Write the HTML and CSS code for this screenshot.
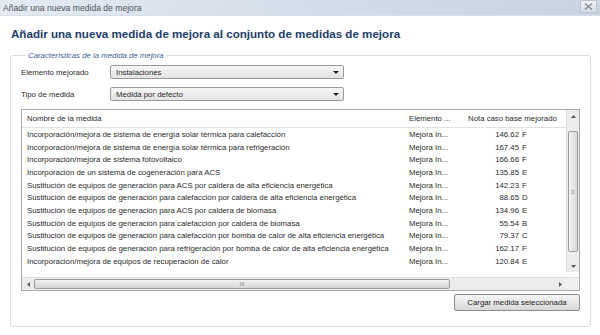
FILE: index.html
```html
<!DOCTYPE html>
<html>
  <head>
    <meta charset="UTF-8">
    <title>Añadir una nueva medida de mejora</title>
    <link rel="stylesheet" href="styles.css">
  </head>
  <body>
    <div class="window">
      <!-- Title bar -->
      <div class="titlebar">
        <span class="titlebar-text">Añadir una nueva medida de mejora</span>
        <span class="close-btn">
          <svg width="9" height="7" viewBox="0 0 9 7"><path d="M1 0.5 L8 6.5 M8 0.5 L1 6.5" stroke="#8a9099" stroke-width="1.4"/></svg>
        </span>
      </div>

      <div class="content">
        <h1 class="heading">Añadir una nueva medida de mejora al conjunto de medidas de mejora</h1>

        <fieldset class="group">
          <legend class="group-legend">Características de la medida de mejora</legend>

          <div class="field-row">
            <label class="field-label">Elemento mejorado</label>
            <div class="combo"><span>Instalaciones</span><span class="combo-arrow"></span></div>
          </div>
          <div class="field-row">
            <label class="field-label">Tipo de medida</label>
            <div class="combo"><span>Medida por defecto</span><span class="combo-arrow"></span></div>
          </div>

          <!-- Measures list -->
          <div class="grid">
            <div class="grid-main">
              <div class="grid-body">
                <div class="grid-row grid-header">
                  <span class="col-name">Nombre de la medida</span>
                  <span class="col-elem">Elemento ...</span>
                  <span class="col-nota head">Nota caso base mejorado</span>
                </div>
                <div class="grid-row"><span class="col-name">Incorporación/mejora de sistema de energía solar térmica para calefacción</span><span class="col-elem">Mejora In...</span><span class="col-nota"><span class="num">146.62</span>F</span></div>
                <div class="grid-row"><span class="col-name">Incorporación/mejora de sistema de energía solar térmica para refrigeración</span><span class="col-elem">Mejora In...</span><span class="col-nota"><span class="num">167.45</span>F</span></div>
                <div class="grid-row"><span class="col-name">Incorporación/mejora de sistema fotovoltaico</span><span class="col-elem">Mejora In...</span><span class="col-nota"><span class="num">166.66</span>F</span></div>
                <div class="grid-row"><span class="col-name">Incorporación de un sistema de cogeneración para ACS</span><span class="col-elem">Mejora In...</span><span class="col-nota"><span class="num">135.85</span>E</span></div>
                <div class="grid-row"><span class="col-name">Sustitución de equipos de generación para ACS por caldera de alta eficiencia energética</span><span class="col-elem">Mejora In...</span><span class="col-nota"><span class="num">142.23</span>F</span></div>
                <div class="grid-row"><span class="col-name">Sustitución de equipos de generación para calefacción por caldera de alta eficiencia energética</span><span class="col-elem">Mejora In...</span><span class="col-nota"><span class="num">88.65</span>D</span></div>
                <div class="grid-row"><span class="col-name">Sustitución de equipos de generación para ACS por caldera de biomasa</span><span class="col-elem">Mejora In...</span><span class="col-nota"><span class="num">134.96</span>E</span></div>
                <div class="grid-row"><span class="col-name">Sustitución de equipos de generación para calefacción por caldera de biomasa</span><span class="col-elem">Mejora In...</span><span class="col-nota"><span class="num">55.54</span>B</span></div>
                <div class="grid-row"><span class="col-name">Sustitución de equipos de generación para calefacción por bomba de calor de alta eficiencia energética</span><span class="col-elem">Mejora In...</span><span class="col-nota"><span class="num">79.37</span>C</span></div>
                <div class="grid-row"><span class="col-name">Sustitución de equipos de generación para refrigeración por bomba de calor de alta eficiencia energética</span><span class="col-elem">Mejora In...</span><span class="col-nota"><span class="num">162.17</span>F</span></div>
                <div class="grid-row"><span class="col-name">Incorporación/mejora de equipos de recuperación de calor</span><span class="col-elem">Mejora In...</span><span class="col-nota"><span class="num">120.84</span>E</span></div>
              </div>

              <!-- Vertical scrollbar -->
              <div class="vscroll">
                <span class="arrow-box"><svg width="5" height="3" viewBox="0 0 5 3"><path d="M0 3 L2.5 0 L5 3 Z" fill="#555"/></svg></span>
                <span class="vthumb"><span class="grip">≡</span></span>
                <span class="arrow-box"><svg width="5" height="3" viewBox="0 0 5 3"><path d="M0 0 L2.5 3 L5 0 Z" fill="#555"/></svg></span>
              </div>
            </div>

            <!-- Horizontal scrollbar -->
            <div class="hscroll">
              <span class="harrow"><svg width="3" height="5" viewBox="0 0 3 5"><path d="M3 0 L0 2.5 L3 5 Z" fill="#555"/></svg></span>
              <span class="hthumb"><span class="grip">III</span></span>
              <span class="htrack"></span>
              <span class="harrow"><svg width="3" height="5" viewBox="0 0 3 5"><path d="M0 0 L3 2.5 L0 5 Z" fill="#555"/></svg></span>
              <span class="corner"></span>
            </div>
          </div>

          <div class="actions">
            <button class="btn">Cargar medida seleccionada</button>
          </div>
        </fieldset>
      </div>
    </div>
  </body>
</html>
```

FILE: styles.css
```css
/* Reset */
* {
  box-sizing: border-box;
  margin: 0;
  padding: 0;
}

html, body {
  width: 600px;
  height: 335px;
  background-color: #ffffff;
  overflow: hidden;
  font-family: "Liberation Sans", Arial, sans-serif;
  color: #2a2a2a;
}

.window {
  width: 600px;
  height: 335px;
  display: flex;
  flex-direction: column;
}

/* Title bar */
.titlebar {
  height: 16px;
  display: flex;
  align-items: center;
  justify-content: space-between;
  padding: 0 3px 0 3px;
  background: linear-gradient(to right, #e4eaf1 0%, #d3dde9 50%, #c8d4e2 100%);
  border-bottom: 1px solid #d8dfe8;
}

.titlebar-text {
  font-size: 8.6px;
  color: #4f5560;
}

.close-btn {
  width: 17px;
  height: 13px;
  margin-top: -2px;
  display: flex;
  align-items: center;
  justify-content: center;
  border: 1px solid #b9c2cd;
  border-radius: 2px;
  background: linear-gradient(#eef1f5, #d8dee6);
}

/* Main content */
.content {
  padding: 11px 10px 0 10px;
}

.heading {
  font-size: 11.6px;
  font-weight: bold;
  color: #1d3d6b;
  margin-left: 1px;
  margin-bottom: 11px;
}

/* Group box */
.group {
  width: 581px;
  height: 276px;
  border: 1px solid #dcdcdc;
  border-radius: 3px;
  padding: 5px 10px 0 10px;
}

.group-legend {
  font-size: 7.8px;
  font-style: italic;
  color: #3a5f95;
  margin-left: 5px;
  padding: 0 2px;
}

.field-row {
  display: flex;
  align-items: center;
  height: 14px;
  margin-bottom: 8px;
}

.field-label {
  width: 89px;
  font-size: 7.8px;
}

.combo {
  width: 234px;
  height: 14px;
  display: flex;
  align-items: center;
  justify-content: space-between;
  padding: 0 4px 0 5px;
  font-size: 7.8px;
  border: 1px solid #9a9a9a;
  border-radius: 2px;
  background: linear-gradient(#f6f6f6, #e3e3e3);
}

.combo-arrow {
  width: 0;
  height: 0;
  border-left: 3px solid transparent;
  border-right: 3px solid transparent;
  border-top: 3px solid #222222;
}

/* List grid */
.grid {
  width: 559px;
  margin-top: 7px;
  border: 1px solid #a9a9a9;
  display: flex;
  flex-direction: column;
}

.grid-main {
  display: flex;
  height: 162px;
}

.grid-body {
  flex: 1;
  font-size: 7.8px;
  overflow: hidden;
}

.grid-row {
  display: flex;
  height: 12.7px;
  align-items: center;
  white-space: nowrap;
}

.grid-header {
  height: 18px;
  border-bottom: 1px solid #e2e2e2;
}

.col-name {
  width: 382px;
  padding-left: 5px;
  overflow: hidden;
}

.col-elem {
  width: 58px;
  padding-left: 5px;
  overflow: hidden;
}

.col-nota {
  flex: 1;
  display: flex;
}

.col-nota.head {
  padding-left: 6px;
}

.num {
  width: 60px;
  text-align: right;
  padding-right: 3px;
}

/* Scrollbars */
.vscroll {
  width: 13px;
  display: flex;
  flex-direction: column;
  background: #ececec;
  border-left: 1px solid #e0e0e0;
}

.arrow-box {
  height: 12px;
  display: flex;
  align-items: center;
  justify-content: center;
}

.vthumb {
  flex: 1;
  margin: 9px 1px 8px 1px;
  border: 1px solid #9c9c9c;
  border-radius: 2px;
  background: linear-gradient(to right, #f3f3f3, #d9d9d9);
  display: flex;
  align-items: center;
  justify-content: center;
}

.grip {
  font-size: 6px;
  color: #888888;
}

.hscroll {
  height: 13px;
  margin-top: 5px;
  display: flex;
  background: #ececec;
  border-top: 1px solid #e0e0e0;
}

.harrow {
  width: 12px;
  display: flex;
  align-items: center;
  justify-content: center;
}

.hthumb {
  width: 416px;
  margin: 1px 0;
  border: 1px solid #9c9c9c;
  border-radius: 2px;
  background: linear-gradient(#f3f3f3, #d6d6d6);
  display: flex;
  align-items: center;
  justify-content: center;
}

.htrack {
  flex: 1;
}

.corner {
  width: 13px;
  background: #f0f0f0;
}

/* Buttons */
.actions {
  display: flex;
  justify-content: flex-end;
  width: 559px;
  margin-top: 3px;
}

.btn {
  width: 126px;
  height: 17px;
  font-family: "Liberation Sans", Arial, sans-serif;
  font-size: 7.8px;
  color: #222222;
  border: 1px solid #8d8d8d;
  border-radius: 2px;
  background: linear-gradient(#f4f4f4 0%, #e8e8e8 50%, #d6d6d6 100%);
}
```
